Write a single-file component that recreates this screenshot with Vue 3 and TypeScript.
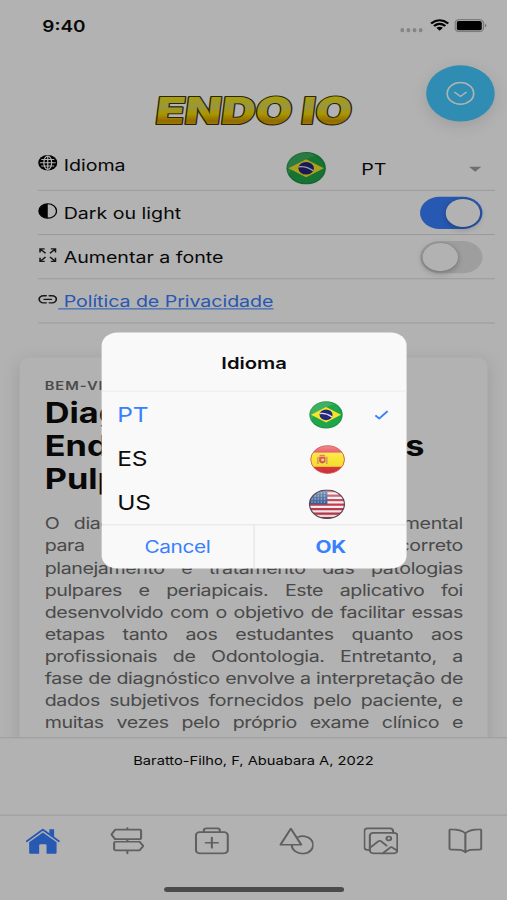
<script setup lang="ts">
import { ref } from 'vue'

interface Language {
  code: string
  flag: string
}

const languages: Language[] = [
  { code: 'PT', flag: 'flag-br' },
  { code: 'ES', flag: 'flag-es' },
  { code: 'US', flag: 'flag-us' },
]
const selected = ref('PT')
const darkMode = ref(true)
const largeFont = ref(false)

const titleLines = ['Diagnóstico', 'Endodontia e Doenças', 'Pulpares']
const lines = [
  'O diagnóstico pulpar exato é fundamental',
  'para o adequado e correto',
  'planejamento e tratamento das patologias',
  'pulpares e periapicais. Este aplicativo foi',
  'desenvolvido com o objetivo de facilitar essas',
  'etapas tanto aos estudantes quanto aos',
  'profissionais de Odontologia. Entretanto, a',
  'fase de diagnóstico envolve a interpretação de',
  'dados subjetivos fornecidos pelo paciente, e',
  'muitas vezes pelo próprio exame clínico e',
]
</script>

<template>
  <div class="viewport">
    <svg class="defs" width="0" height="0" aria-hidden="true">
      <defs>
        <clipPath id="disc"><circle cx="20" cy="20" r="19" /></clipPath>
        <linearGradient id="gloss" x1="0" y1="0" x2="0" y2="1">
          <stop offset="0" stop-color="#fff" stop-opacity=".45" />
          <stop offset=".45" stop-color="#fff" stop-opacity=".05" />
          <stop offset="1" stop-color="#000" stop-opacity=".12" />
        </linearGradient>
        <symbol id="flag-br" viewBox="0 0 40 40">
          <circle cx="20" cy="20" r="19.5" fill="#1c9443" />
          <circle cx="20" cy="20" r="18" fill="#21a54a" />
          <path d="M1 9Q14-5 30 5Q8 12 2 29Z" fill="#fff" opacity=".13" />
          <path d="M2.5 20L20 9L37.5 20L20 31Z" fill="#f6e32b" />
          <circle cx="20" cy="20" r="7.6" fill="#25257c" />
          <path d="M12.7 18.2Q20 17 27 23" stroke="#d8dcf0" stroke-width="1.7" fill="none" />
        </symbol>
        <symbol id="flag-es" viewBox="0 0 40 40">
          <g clip-path="url(#disc)">
            <rect width="40" height="40" fill="#e2333c" />
            <rect y="10.5" width="40" height="19.5" fill="#fbe42a" />
            <path d="M8 16h2v10H8zM18 16h2v10h-2z" fill="#d99a59" />
            <path d="M10.5 16h7v7q-3.500 5-7 0z" fill="#d8503f" />
            <circle cx="14.500" cy="20.500" r="1.800" fill="#f3c8a0" />
            <path d="M11 13.500h6v2h-6z" fill="#cf7b38" />
            <circle cx="20" cy="20" r="19.5" fill="url(#gloss)" />
          </g>
          <circle cx="20" cy="20" r="19" fill="none" stroke="#c95b4c" stroke-width="1" />
        </symbol>
        <symbol id="flag-us" viewBox="0 0 40 40">
          <g clip-path="url(#disc)">
            <rect width="40" height="40" fill="#f4f0f2" />
            <path d="M0 2.500h40M0 8.500h40M0 14.500h40M0 20.500h40M0 26.500h40M0 32.500h40M0 38.500h40" stroke="#c22f43" stroke-width="3" />
            <rect width="20.500" height="20" fill="#31578f" />
            <path d="M3 5h17M3 9h17M3 13h17M3 17h17" stroke="#b9cbe4" stroke-width="1.300" stroke-dasharray="1.400 2" />
            <circle cx="20" cy="20" r="19.5" fill="url(#gloss)" />
          </g>
          <circle cx="20" cy="20" r="19" fill="none" stroke="#5b4453" stroke-width="1.300" />
        </symbol>
      </defs>
    </svg>

    <div class="screen">
      <header class="status">
        <span class="time">9:40</span>
        <span class="signals">
          <i v-for="n in 4" :key="n" class="dot"></i>
          <svg class="wifi" viewBox="0 0 16 12">
            <path d="M1 4.300Q8-2 15 4.300M3.400 6.900Q8 2.700 12.600 6.900" fill="none" stroke="#000" stroke-width="2" />
            <path d="M5.300 8.700Q8 6.400 10.700 8.700L8 11.600Z" />
          </svg>
          <svg class="battery" viewBox="0 0 27 13">
            <rect x=".6" y=".6" width="23.200" height="11.800" rx="3.500" fill="none" stroke="#b4b4b4" stroke-width="1.200" />
            <rect x="2" y="2" width="20.400" height="9" rx="1.700" />
            <path d="M25.200 4.500q2 2 0 4z" fill="#999" />
          </svg>
        </span>
      </header>

      <div class="hero">
        <svg class="logo" viewBox="0 0 166 36">
          <defs>
            <linearGradient id="gold" x1="0" y1="0" x2="0" y2="1">
              <stop offset=".18" stop-color="#f0e600" />
              <stop offset=".42" stop-color="#dcd65c" />
              <stop offset=".58" stop-color="#f2da00" />
              <stop offset=".74" stop-color="#d39a00" />
              <stop offset=".9" stop-color="#e6c400" />
            </linearGradient>
          </defs>
          <text x="2.500" y="31" textLength="160" lengthAdjust="spacingAndGlyphs" transform="translate(3 0) skewX(-6)">ENDO IO</text>
        </svg>
      </div>

      <ul class="settings">
        <li class="row first">
          <svg class="ico" viewBox="0 0 16 16">
            <circle cx="8" cy="8" r="7.800" />
            <g fill="none" stroke="#fff" stroke-width="1"><ellipse cx="8" cy="8" rx="3.200" ry="6.600" /><path d="M8 1v14M1.500 8h13M2.700 4.700h10.600M2.700 11.300h10.600" /></g>
          </svg>
          <span class="label">Idioma</span>
          <span class="picker">
            <svg class="flag-lg"><use href="#flag-br" /></svg>
            <span class="value">{{ selected }}</span>
            <i class="caret"></i>
          </span>
        </li>
        <li class="row">
          <svg class="ico" viewBox="0 0 16 16"><circle cx="8" cy="8" r="7.200" fill="none" stroke="#000" stroke-width="1.100" /><path d="M8 .8A7.200 7.200 0 0 0 8 15.200Z" /></svg>
          <span class="label">Dark ou light</span>
          <span class="toggle" :class="{ on: darkMode }"><i></i></span>
        </li>
        <li class="row">
          <svg class="ico" viewBox="0 0 16 16"><path d="M1.700 5.500V1.700H5.500M2 2l4.200 4.200M10.500 1.700h3.800V5.500M14 2L9.800 6.200M1.700 10.500v3.800H5.500M2 14l4.200-4.200M14.300 10.500v3.800H10.500M14 14L9.800 9.800" fill="none" stroke="#222" stroke-width="1.300" /></svg>
          <span class="label">Aumentar a fonte</span>
          <span class="toggle" :class="{ on: largeFont }"><i></i></span>
        </li>
        <li class="row">
          <svg class="ico" viewBox="0 0 16 16"><path d="M6.700 11.500H4.500a3.500 3.500 0 0 1 0-7H6.700M9.300 4.500h2.200a3.500 3.500 0 0 1 0 7H9.300M5 8h6" fill="none" stroke="#222" stroke-width="1.400" stroke-linecap="round" /></svg>
          <a class="label link">&nbsp;Política de Privacidade</a>
        </li>
      </ul>

      <main class="content">
        <article class="card">
          <p class="sub">BEM-VINDO</p>
          <h1><span v-for="(t, i) in titleLines" :key="t" :class="{ full: i === 1 }">{{ t }}</span></h1>
          <div class="text"><p v-for="l in lines" :key="l">{{ l }}</p></div>
        </article>
      </main>

      <footer class="credit">Baratto-Filho, F, Abuabara A, 2022</footer>

      <nav class="tabs">
        <svg class="tab home" viewBox="0 0 28 28">
          <path d="M1 14.500L14 3L27 14.500" fill="none" stroke="currentColor" stroke-width="1.700" stroke-linecap="round" stroke-linejoin="round" />
          <path d="M19.300 2.500h3.900v8l-3.900-3.400zM14 5.700L25.200 15.600V26a1 1 0 0 1-1 1H17V18.500a1 1 0 0 0-1-1h-4a1 1 0 0 0-1 1V27H3.800a1 1 0 0 1-1-1V15.600Z" fill="currentColor" />
        </svg>
        <svg class="tab" viewBox="0 0 28 28">
          <path d="M14 1.500V3M14 12.500V15M14 23.500V26.500M4 3H24a1.200 1.200 0 0 1 1.200 1.200v7.100a1.200 1.200 0 0 1-1.200 1.200H4L1 7.750ZM24 15H4.400a1.200 1.200 0 0 0-1.200 1.200v6.100a1.200 1.200 0 0 0 1.200 1.200H24L27 19.250Z" />
        </svg>
        <svg class="tab" viewBox="0 0 28 28">
          <rect x="1" y="5.500" width="26" height="21" rx="3" /><path d="M7.500 5.500V3.700a2 2 0 0 1 2-2h9a2 2 0 0 1 2 2V5.500M14 11v10M9 16h10" />
        </svg>
        <svg class="tab" viewBox="0 0 28 28">
          <path d="M9.500 2L18 18H1Z" /><path d="M15.500 10.200A8.700 8.700 0 1 1 10.300 18" />
        </svg>
        <svg class="tab" viewBox="0 0 28 28">
          <rect x="5" y="6.200" width="22.500" height="20.300" rx="2.700" />
          <path d="M24 6.200V4.200a2.500 2.500 0 0 0-2.500-2.500H3A2.500 2.500 0 0 0 .5 4.200V20.500A2.500 2.500 0 0 0 3 23h2M5 21l7.100-6.500a1.500 1.500 0 0 1 2 0l4.500 4.300M15.500 26.500l6-5.700a1.500 1.500 0 0 1 2 0l4 3.200" />
          <circle cx="20.500" cy="11.700" r="1.900" />
        </svg>
        <svg class="tab" viewBox="0 0 28 28">
          <path d="M14 6.500C11.500 3.500 7.500 2.600 2.300 2.600A1.200 1.200 0 0 0 1 3.800V21.500A1.200 1.200 0 0 0 2.300 22.800C8 22.800 11.500 22.500 14 25.500C16.500 22.500 20 22.800 25.700 22.800A1.200 1.200 0 0 0 27 21.500V3.800A1.200 1.200 0 0 0 25.700 2.600C20.500 2.600 16.500 3.500 14 6.500ZV25.500" />
        </svg>
      </nav>
      <div class="indicator"><i></i></div>

      <button class="fab" aria-label="Menu">
        <svg viewBox="0 0 24 24"><circle cx="12" cy="12" r="10.800" /><path d="M7 10.500L12 15L17 10.500" /></svg>
      </button>

      <div class="backdrop">
        <section class="alert" role="dialog">
          <h2>Idioma</h2>
          <div
            v-for="lang in languages"
            :key="lang.code"
            class="option"
            :class="{ active: lang.code === selected }"
            @click="selected = lang.code"
          >
            <span class="code">{{ lang.code }}</span>
            <svg class="flag" :class="lang.flag"><use :href="'#' + lang.flag" /></svg>
            <svg v-if="lang.code === selected" class="check" viewBox="0 0 13 11"><path d="M1 6L4.500 9.500L12 1.500" /></svg>
          </div>
          <div class="buttons">
            <button>Cancel</button>
            <button class="ok">OK</button>
          </div>
        </section>
      </div>
    </div>
  </div>
</template>

<style>
body {
  overflow: hidden;
}
</style>

<style scoped>
.viewport {
  width: 507px;
  height: 900px;
  overflow: hidden;
  background: #b2b2b2;
}
.defs {
  position: absolute;
}
/* The phone layout is 414x896 points, stretched to fill the window. */
.screen {
  position: relative;
  display: flex;
  flex-direction: column;
  width: 414px;
  height: 896px;
  transform: scale(1.22464, 1.00446);
  transform-origin: 0 0;
  background: #fff;
  font-family: Inter, 'Liberation Sans', sans-serif;
  font-size: 16px;
  color: #0c0c0c;
  overflow: hidden;
}
.status {
  display: flex;
  justify-content: space-between;
  box-sizing: border-box;
  height: 44px;
  padding: 16px 16.500px 0 34.500px;
}
.time {
  font-size: 15.500px;
  font-weight: 600;
  line-height: 21px;
}
.signals {
  display: flex;
  align-items: flex-start;
  padding-top: 3px;
}
.dot {
  width: 3.400px;
  height: 3.500px;
  margin: 9px 1.500px 0 0;
  border-radius: 1.500px;
  background: #c0c0c0;
}
.wifi {
  width: 16px;
  height: 12px;
  margin-left: 4px;
}
.battery {
  width: 27px;
  height: 13px;
  margin-left: 4px;
}
.hero {
  display: flex;
  justify-content: center;
  height: 92px;
}
.logo {
  width: 166px;
  height: 36px;
  margin-top: 47.500px;
  overflow: visible;
}
.logo text {
  font-family: Inter, sans-serif;
  font-size: 37px;
  font-weight: 900;
  fill: url(#gold);
  stroke: #3b3410;
  stroke-width: 2.200px;
  stroke-linejoin: round;
  paint-order: stroke;
}
.settings {
  margin: 0 10.500px 0 31px;
  padding: 0;
  list-style: none;
}
.row {
  display: flex;
  align-items: center;
  box-sizing: border-box;
  height: 44px;
  padding: 0.5px 9.500px 0 0;
  border-bottom: 1px solid #dedede;
}
.row.first {
  height: 54px;
  padding-top: 2px;
}
.ico {
  width: 16px;
  height: 16px;
  margin: 0 5px 4px 0;
}
.label {
  flex: 1;
  line-height: 20px;
}
.link {
  margin-left: -4.500px;
  letter-spacing: -0.04px;
  color: #3880ff;
}
a.link {
  flex: none;
  text-decoration: underline;
}
.picker {
  display: flex;
  align-items: center;
  width: 161px;
  padding-top: 9px;
}
.flag-lg {
  width: 34px;
  height: 33px;
  margin-top: -2px;
}
.value {
  flex: 1;
  padding-left: 28px;
}
.caret {
  border: 5px solid transparent;
  border-top-color: #a0a0a0;
  border-bottom: 0;
  margin-right: 1px;
}
.toggle {
  display: flex;
  box-sizing: border-box;
  width: 51px;
  height: 32px;
  padding: 2px;
  border-radius: 16px;
  background: #e3e3e4;
}
.toggle i {
  width: 28.500px;
  height: 28px;
  border-radius: 50%;
  background: #fff;
  box-shadow: 0 2px 6px rgba(0, 0, 0, 0.25), 0 0 1px rgba(0, 0, 0, 0.3);
}
.toggle.on {
  justify-content: flex-end;
  background: #3880ff;
}
.content {
  flex: 1;
  min-height: 0;
  padding: 34px 16px 0;
  overflow: hidden;
}
.card {
  height: 420px;
  padding: 20px 20px 20px 20.500px;
  border-radius: 8px;
  background: #fff;
  box-shadow: 0 4px 16px rgba(0, 0, 0, 0.13);
}
.sub {
  margin: 0 0 4px;
  font-size: 12px;
  font-weight: 600;
  line-height: 15px;
  letter-spacing: 0.8px;
  color: #6c6c6c;
}
h1 {
  margin: 0 0 16px;
  font-size: 28px;
  font-weight: 700;
  line-height: 33px;
}
h1 span {
  display: block;
  white-space: nowrap;
}
h1 .full {
  width: 310px;
  text-align-last: justify;
}
.text p {
  margin: 0;
  line-height: 22px;
  letter-spacing: -0.32px;
  color: #6a6a6a;
  white-space: nowrap;
  text-align: justify;
  text-align-last: justify;
}
.credit {
  height: 76px;
  border-top: 1px solid #dedede;
  font-size: 12px;
  line-height: 46px;
  text-align: center;
}
.tabs {
  display: flex;
  align-items: center;
  justify-content: space-around;
  height: 50px;
  padding-left: 1px;
  border-top: 1px solid #dedede;
}
.tab {
  width: 28px;
  height: 28px;
  fill: none;
  stroke: #8a8a8a;
  stroke-width: 1.700;
  stroke-linejoin: round;
  stroke-linecap: round;
}
.home {
  stroke: none;
  color: #3880ff;
}
.indicator {
  display: flex;
  justify-content: center;
  height: 34px;
}
.indicator i {
  width: 147px;
  height: 5px;
  margin-top: 21px;
  margin-left: 1px;
  border-radius: 3px;
  background: #6c6c6c;
}
.fab {
  position: absolute;
  top: 64.500px;
  left: 348px;
  display: grid;
  place-items: center;
  width: 56px;
  height: 56px;
  padding: 0;
  border: 0;
  border-radius: 50%;
  background: #44c9ff;
  box-shadow: 0 4px 14px rgba(0, 0, 0, 0.12);
}
.fab svg {
  width: 24px;
  height: 24px;
  fill: none;
  stroke: #fff;
  stroke-width: 1.400;
}
.backdrop {
  position: absolute;
  inset: 0;
  display: flex;
  align-items: center;
  justify-content: center;
  background: rgba(0, 0, 0, 0.3);
}
.alert {
  width: 249.500px;
  margin: 1.500px 0 0 1px;
  border-radius: 13px;
  background: #f9f9f9;
  overflow: hidden;
}
h2 {
  box-sizing: border-box;
  height: 59px;
  margin: 0;
  padding-top: 19.500px;
  border-bottom: 1px solid #ececec;
  font-size: 16.500px;
  font-weight: 600;
  line-height: 20px;
  text-align: center;
}
.option {
  display: flex;
  align-items: center;
  height: 44px;
  padding-left: 13px;
  font-size: 20px;
}
.code {
  width: 156px;
  padding-top: 0.5px;
  letter-spacing: -0.2px;
}
.active {
  color: #3880ff;
}
.flag {
  width: 29px;
  height: 29px;
  margin: 3px 0 0 1px;
}
.flag-br {
  width: 28.500px;
  height: 28px;
  margin: 1px 0 0;
}
.flag-us {
  width: 30px;
  height: 30px;
  margin-left: 0;
}
.check {
  width: 13px;
  height: 10px;
  margin: 1px 0 0 25px;
  fill: none;
  stroke: currentColor;
  stroke-width: 1.900;
}
.buttons {
  display: flex;
}
.buttons button {
  flex: 1;
  height: 44px;
  padding: 0;
  border: 0;
  border-top: 1px solid #e4e4e4;
  background: none;
  color: #3880ff;
  font: 400 17px Inter, sans-serif;
  letter-spacing: -0.35px;
}
.buttons .ok {
  border-left: 1px solid #e4e4e4;
  font-weight: 700;
  letter-spacing: -0.1px;
}
</style>
